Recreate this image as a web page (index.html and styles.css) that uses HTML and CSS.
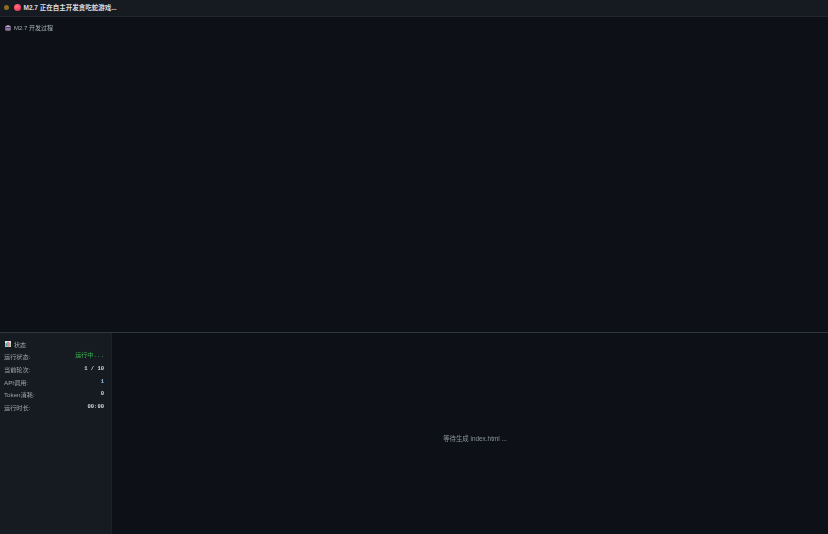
FILE: index.html
```html
<!DOCTYPE html>
<html lang="zh">

<head>
    <meta charset="UTF-8">
    <title>M2.7</title>
    <link rel="stylesheet" href="styles.css">
</head>

<body>
    <div class="page">
        <header class="topBar">
            <span class="statusDot"></span>
            <span class="logoDot"></span>
            <span class="topTitle">M2.7 正在自主开发贪吃蛇游戏...</span>
        </header>
        <section class="logPanel">
            <div class="panelTitle">
                <svg class="titleIcon" viewBox="0 0 7 7">
                    <rect x="0.5" y="1" width="6" height="5.5" rx="1" fill="#c9a9d6" />
                    <rect x="1" y="2.4" width="5" height="1.6" fill="#3b3560" />
                    <rect x="1.2" y="4.6" width="4.6" height="1.4" fill="#8f6f9e" />
                    <rect x="2.5" y="0" width="2" height="1" fill="#d98a9a" />
                </svg>
                <span>M2.7 开发过程</span>
            </div>
        </section>
        <section class="bottomArea">
            <aside class="statusPanel">
                <div class="statusTitle">
                    <svg class="titleIcon" viewBox="0 0 7 7">
                        <rect width="7" height="7" fill="#dfe6ea" />
                        <rect x="0.6" y="2.5" width="1.8" height="4" fill="#3fb0a0" />
                        <rect x="2.6" y="0.8" width="1.8" height="5.7" fill="#d06a8a" />
                        <rect x="4.6" y="2" width="1.8" height="4.5" fill="#b7b45a" />
                    </svg>
                    <span>状态</span>
                </div>
                <div class="statRow"><span class="statLabel">运行状态:</span><span class="statValue running">运行中...</span></div>
                <div class="statRow"><span class="statLabel">当前轮次:</span><span class="statValue">1 / 10</span></div>
                <div class="statRow"><span class="statLabel">API调用:</span><span class="statValue accent">1</span></div>
                <div class="statRow"><span class="statLabel">Token消耗:</span><span class="statValue">0</span></div>
                <div class="statRow"><span class="statLabel">运行时长:</span><span class="statValue">00:00</span></div>
            </aside>
            <main class="previewPanel">等待生成 index.html ...</main>
        </section>
    </div>
</body>

</html>
```

FILE: styles.css
```css
* {
    box-sizing: border-box;
}

html,
body {
    height: 100%;
}

body {
    margin: 0;
    overflow: hidden;
    background-color: #0d1117;
}

/* the whole shot is slightly soft, as if it was scaled down */
.page {
    height: 100%;
    display: flex;
    flex-direction: column;
    color: #c9d1d9;
    font-family: "Liberation Sans", "Noto Sans CJK SC", sans-serif;
    filter: blur(0.25px);
}

.topBar {
    flex: 0 0 17px;
    display: flex;
    align-items: center;
    padding: 0 4px 2px;
    background-color: #161b22;
    border-bottom: 1px solid #21262d;
}

.statusDot {
    width: 5px;
    height: 5px;
    margin-right: 5px;
    border-radius: 50%;
    background-color: #8a6d1f;
}

.logoDot {
    width: 7px;
    height: 7px;
    margin-right: 2.5px;
    border-radius: 50%;
    background: radial-gradient(circle at 40% 35%, #ff6b80, #e8304e);
}

.topTitle {
    font-size: 6.5px;
    font-weight: 700;
    color: #d8dee4;
}

.logPanel {
    flex: 0 0 316px;
    padding: 6px 5px;
    border-bottom: 1px solid #30363d;
}

.panelTitle,
.statusTitle {
    display: flex;
    align-items: center;
    gap: 3px;
    font-size: 6px;
    color: #a4acb5;
}

.titleIcon {
    width: 6px;
    height: 6px;
}

.bottomArea {
    flex: 1;
    display: flex;
}

.statusPanel {
    flex: 0 0 112px;
    padding: 7px 7px 0 4px;
    background-color: #161b22;
    border-right: 1px solid #1c2128;
}

.statusTitle {
    padding-left: 1px;
    margin-bottom: 2px;
    height: 8px;
}

.statRow {
    display: flex;
    justify-content: space-between;
    height: 12.8px;
    font-size: 6.2px;
    line-height: 13px;
}

.statLabel {
    color: #9aa3ad;
}

.statValue {
    position: relative;
    top: -1px;
    font-family: "Liberation Mono", "Noto Sans CJK SC", monospace;
    font-size: 5.5px;
    font-weight: 700;
    color: #d4dae0;
}

.running {
    font-size: 6px;
    color: #3fb950;
    font-weight: 400;
}

.accent {
    color: #8fc4f0;
}

.previewPanel {
    flex: 1;
    display: flex;
    align-items: center;
    justify-content: center;
    padding: 9px 0 0 10px;
    font-size: 6.4px;
    color: #8b949e;
}
```
